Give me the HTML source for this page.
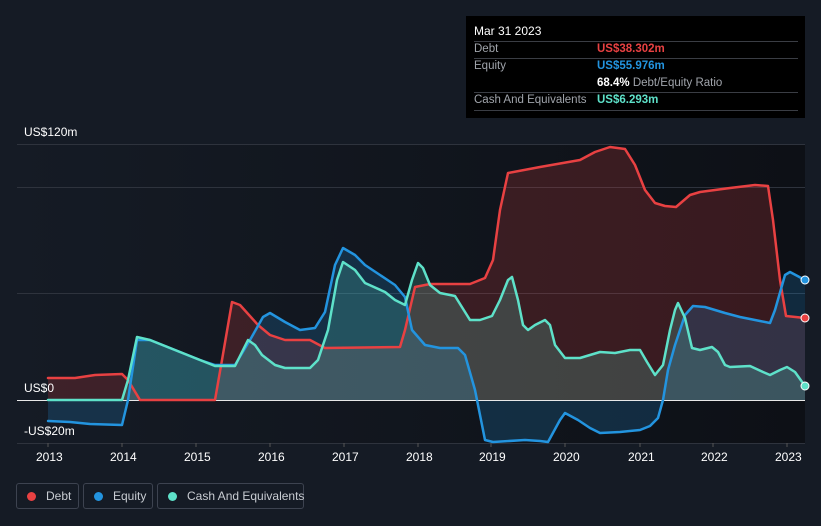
<!DOCTYPE html>
<html><head><meta charset="utf-8"><style>
body{margin:0;width:821px;height:526px;background:#151b25;font-family:"Liberation Sans",sans-serif;overflow:hidden;position:relative}
.t{position:absolute;font-size:12px;color:#fff}
.tip{position:absolute;left:466px;top:16px;width:339px;height:102px;background:#000}
.tip .r{position:absolute;left:8px;width:324px;border-top:1px solid #3a3d44;}
.lbl{position:absolute;left:8px;font-size:11.5px;color:#a0a4ab}
.val{position:absolute;left:131px;font-size:11.5px;font-weight:bold}
.leg{position:absolute;top:483px;height:26px;border:1px solid #3d4350;border-radius:3px;box-sizing:border-box;font-size:12px;color:#c8ccd2;line-height:24px;white-space:nowrap}
.leg i{display:inline-block;width:9px;height:9px;border-radius:50%;margin:0 10px 0 10px;vertical-align:-1px}
</style></head><body>
<svg width="821" height="526" style="position:absolute;left:0;top:0">
<defs>
<linearGradient id="bg" x1="0" x2="1"><stop offset="0" stop-color="#151b25"/><stop offset="1" stop-color="#0d1016"/></linearGradient>
</defs>
<rect x="17" y="144" width="788" height="299" fill="url(#bg)"/>
<g stroke="#2e333d" stroke-width="1">
<line x1="17" x2="805" y1="144.5" y2="144.5"/><line x1="17" x2="805" y1="187.5" y2="187.5"/><line x1="17" x2="805" y1="293.5" y2="293.5"/><line x1="17" x2="805" y1="443.5" y2="443.5"/>
</g>
<g stroke="#555" ><line x1="48" x2="48" y1="443" y2="447"/><line x1="122" x2="122" y1="443" y2="447"/><line x1="196" x2="196" y1="443" y2="447"/><line x1="270" x2="270" y1="443" y2="447"/><line x1="344" x2="344" y1="443" y2="447"/><line x1="418" x2="418" y1="443" y2="447"/><line x1="491" x2="491" y1="443" y2="447"/><line x1="565" x2="565" y1="443" y2="447"/><line x1="640" x2="640" y1="443" y2="447"/><line x1="713" x2="713" y1="443" y2="447"/><line x1="787" x2="787" y1="443" y2="447"/></g>
<polygon fill="#e84142" fill-opacity="0.2" points="48,400 48,378 75,378 95,375 122,374 128,380 140,400 215,400 222,360 232,302 240,305 258,325 270,335 285,340 310,340 325,348 400,347 405,330 415,287 430,284 470,284 485,278 493,260 500,210 508,173 540,167 580,160 595,152 610,147 625,149 635,165 645,190 655,203 665,206 676,207 690,195 700,192 730,188 755,185 768,186 773,220 780,280 786,316 805,318 805,400"/>
<polygon fill="#2394df" fill-opacity="0.2" points="48,400 48,421 70,422 90,424 122,425 128,400 137,340 150,340 175,350 200,360 215,365 235,365 250,340 263,317 270,313 285,322 300,330 315,328 325,312 335,265 343,248 355,255 365,265 380,275 395,285 405,297 412,330 425,345 440,348 458,348 465,355 475,390 485,440 493,442 525,440 540,441 548,442 560,420 565,413 578,420 590,428 600,433 620,432 640,430 650,426 658,418 663,400 668,370 675,345 685,315 693,306 705,307 725,313 740,317 760,321 770,323 775,310 785,275 790,272 805,280 805,400"/>
<polygon fill="#5ee1c9" fill-opacity="0.2" points="48,400 122,400 128,380 137,337 150,340 175,350 200,360 215,366 235,366 248,340 255,345 262,355 275,365 285,368 310,368 318,360 328,330 337,280 343,262 355,270 365,283 385,292 395,300 405,305 412,280 418,263 423,268 430,285 440,293 455,296 465,312 470,320 480,320 492,316 500,300 508,280 512,277 518,300 523,325 528,330 535,325 545,320 550,325 555,345 565,358 580,358 600,352 615,353 630,350 640,350 647,362 655,375 663,365 670,330 675,310 678,303 685,318 692,348 700,350 712,347 718,352 725,365 730,367 750,366 763,372 770,375 780,370 787,367 795,372 805,386 805,400"/>
<line x1="17" x2="805" y1="400.5" y2="400.5" stroke="#e8e8e8" stroke-width="1"/>
<g fill="none" stroke-width="2.5" stroke-linejoin="round" stroke-linecap="round">
<polyline stroke="#e84142" points="48,378 75,378 95,375 122,374 128,380 140,400 215,400 222,360 232,302 240,305 258,325 270,335 285,340 310,340 325,348 400,347 405,330 415,287 430,284 470,284 485,278 493,260 500,210 508,173 540,167 580,160 595,152 610,147 625,149 635,165 645,190 655,203 665,206 676,207 690,195 700,192 730,188 755,185 768,186 773,220 780,280 786,316 805,318"/>
<polyline stroke="#2394df" points="48,421 70,422 90,424 122,425 128,400 137,340 150,340 175,350 200,360 215,365 235,365 250,340 263,317 270,313 285,322 300,330 315,328 325,312 335,265 343,248 355,255 365,265 380,275 395,285 405,297 412,330 425,345 440,348 458,348 465,355 475,390 485,440 493,442 525,440 540,441 548,442 560,420 565,413 578,420 590,428 600,433 620,432 640,430 650,426 658,418 663,400 668,370 675,345 685,315 693,306 705,307 725,313 740,317 760,321 770,323 775,310 785,275 790,272 805,280"/>
<polyline stroke="#5ee1c9" points="48,400 122,400 128,380 137,337 150,340 175,350 200,360 215,366 235,366 248,340 255,345 262,355 275,365 285,368 310,368 318,360 328,330 337,280 343,262 355,270 365,283 385,292 395,300 405,305 412,280 418,263 423,268 430,285 440,293 455,296 465,312 470,320 480,320 492,316 500,300 508,280 512,277 518,300 523,325 528,330 535,325 545,320 550,325 555,345 565,358 580,358 600,352 615,353 630,350 640,350 647,362 655,375 663,365 670,330 675,310 678,303 685,318 692,348 700,350 712,347 718,352 725,365 730,367 750,366 763,372 770,375 780,370 787,367 795,372 805,386"/>
</g>
<circle cx="805" cy="280" r="4" fill="#2394df" stroke="#fff" stroke-width="1"/>
<circle cx="805" cy="318" r="4" fill="#e84142" stroke="#fff" stroke-width="1"/>
<circle cx="805" cy="386" r="4" fill="#5ee1c9" stroke="#fff" stroke-width="1"/>
</svg>
<div class="t" style="left:24px;top:125px">US$120m</div>
<div class="t" style="left:24px;top:381px">US$0</div>
<div class="t" style="left:24px;top:424px">-US$20m</div>
<div class="t" style="left:36px;top:450px">2013</div>
<div class="t" style="left:110px;top:450px">2014</div>
<div class="t" style="left:184px;top:450px">2015</div>
<div class="t" style="left:258px;top:450px">2016</div>
<div class="t" style="left:332px;top:450px">2017</div>
<div class="t" style="left:406px;top:450px">2018</div>
<div class="t" style="left:479px;top:450px">2019</div>
<div class="t" style="left:553px;top:450px">2020</div>
<div class="t" style="left:628px;top:450px">2021</div>
<div class="t" style="left:701px;top:450px">2022</div>
<div class="t" style="left:775px;top:450px">2023</div>
<div class="tip">
<div style="position:absolute;left:8px;top:8px;font-size:12px;color:#fff">Mar 31 2023</div>
<div class="r" style="top:25px"></div>
<div class="lbl" style="top:27px">Debt</div><div class="val" style="top:27px;color:#e84142">US$38.302m</div>
<div class="r" style="top:42px"></div>
<div class="lbl" style="top:44px">Equity</div><div class="val" style="top:44px;color:#2394df">US$55.976m</div>
<div class="val" style="top:61px;color:#fff">68.4% <span style="font-weight:normal;color:#a0a4ab">Debt/Equity Ratio</span></div>
<div class="r" style="top:76px"></div>
<div class="lbl" style="top:78px">Cash And Equivalents</div><div class="val" style="top:78px;color:#5ee1c9">US$6.293m</div>
<div class="r" style="top:94px"></div>
</div>
<div class="leg" style="left:16px;width:63px"><i style="background:#e84142"></i>Debt</div>
<div class="leg" style="left:83px;width:70px"><i style="background:#2394df"></i>Equity</div>
<div class="leg" style="left:157px;width:147px"><i style="background:#5ee1c9"></i>Cash And Equivalents</div>
</body></html>
